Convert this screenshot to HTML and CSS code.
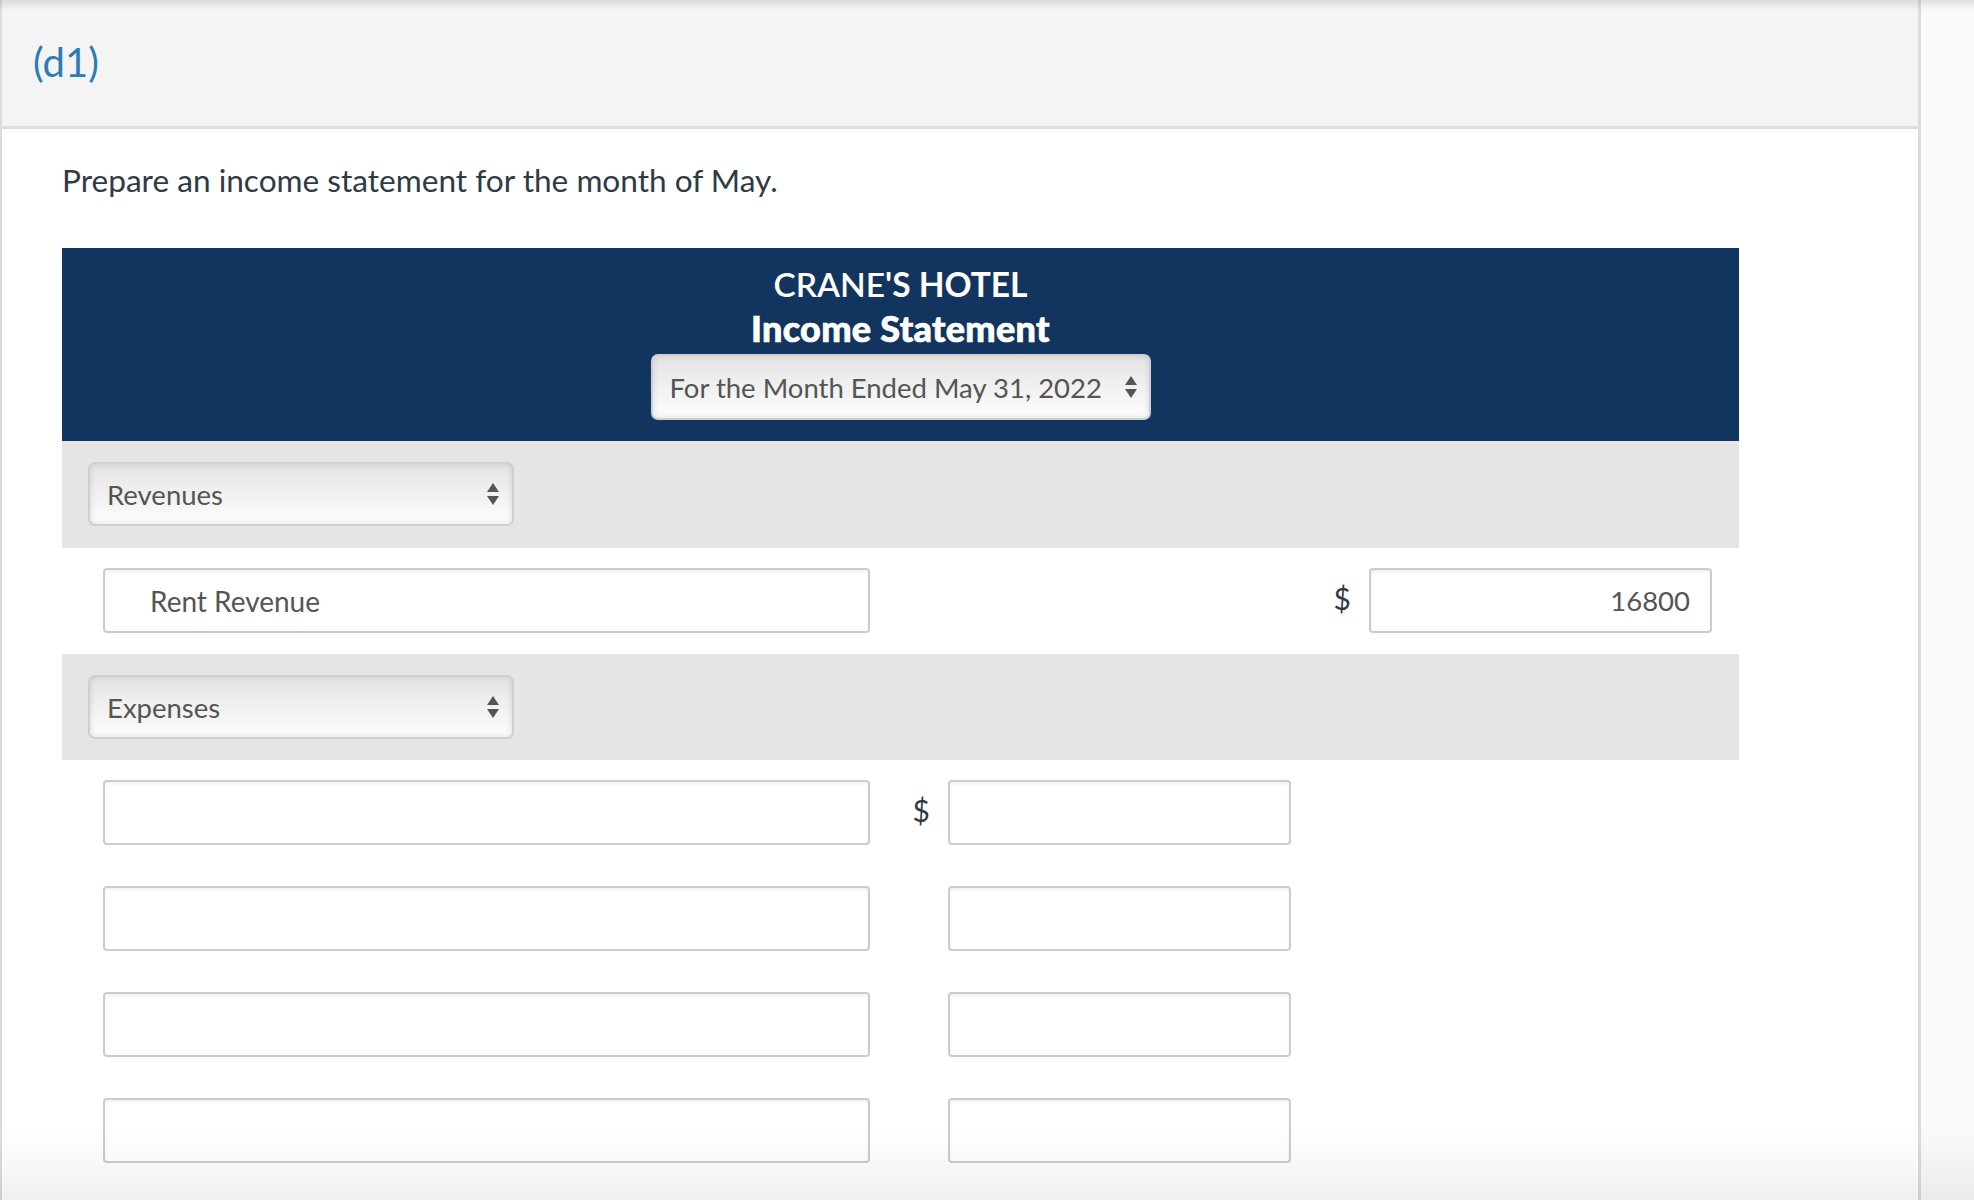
FILE: index.html
```html
<!DOCTYPE html>
<html lang="en">
<head>
<meta charset="utf-8">
<title>Income Statement</title>
<link rel="stylesheet" href="styles.css">
</head>
<body>
<div class="page">
  <main class="panel">
    <header class="part-head">
      <h2 class="part-label">(d1)</h2>
    </header>
    <section class="part-body">
      <p class="prompt">Prepare an income statement for the month of May.</p>
      <div class="statement">
        <div class="st-head">
          <div class="st-company"><span class="semi">CRANE</span>'S HOTEL</div>
          <div class="st-title">Income Statement</div>
          <div class="select select-date">
            <span>For the Month Ended May 31, 2022</span>
            <svg class="arrows" viewBox="0 0 12 22" width="12" height="22"><path d="M6 0 L12 9 L0 9 Z M0 13 L12 13 L6 22 Z" fill="#555"/></svg>
          </div>
        </div>
        <div class="band band-first">
          <div class="select select-sec">
            <span>Revenues</span>
            <svg class="arrows" viewBox="0 0 12 22" width="12" height="22"><path d="M6 0 L12 9 L0 9 Z M0 13 L12 13 L6 22 Z" fill="#555"/></svg>
          </div>
        </div>
        <div class="row">
          <input class="fld fld-label indent" type="text" value="Rent Revenue">
          <div class="cur"></div>
          <div class="spacer"></div>
          <div class="cur">$</div>
          <input class="fld fld-num" type="text" value="16800">
        </div>
        <div class="band">
          <div class="select select-sec">
            <span>Expenses</span>
            <svg class="arrows" viewBox="0 0 12 22" width="12" height="22"><path d="M6 0 L12 9 L0 9 Z M0 13 L12 13 L6 22 Z" fill="#555"/></svg>
          </div>
        </div>
        <div class="row">
          <input class="fld fld-label" type="text" value="">
          <div class="cur">$</div>
          <input class="fld fld-num" type="text" value="">
        </div>
        <div class="row">
          <input class="fld fld-label" type="text" value="">
          <div class="cur"></div>
          <input class="fld fld-num" type="text" value="">
        </div>
        <div class="row">
          <input class="fld fld-label" type="text" value="">
          <div class="cur"></div>
          <input class="fld fld-num" type="text" value="">
        </div>
        <div class="row">
          <input class="fld fld-label" type="text" value="">
          <div class="cur"></div>
          <input class="fld fld-num" type="text" value="">
        </div>
      </div>
    </section>
  </main>
  <aside class="side"></aside>
</div>
<div class="shade-top"></div>
<div class="shade-bottom"></div>
</body>
</html>
```
FILE: styles.css
```css
html, body {
  margin: 0;
  padding: 0;
}
body {
  font-family: Lato, "Open Sans", "Liberation Sans", sans-serif;
  background: #fafafa;
  color: #2e3a45;
  height: 1200px;
  overflow: hidden;
}
.page {
  display: flex;
  height: 1200px;
}
.panel {
  width: 1916px;
  background: #fff;
  border-left: 2px solid #dcdcdc;
  border-right: 3px solid #dcdcdc;
  flex: none;
}
.side {
  flex: 1;
  background: #fafafa;
}
.part-head {
  background: #f4f4f4;
  border-bottom: 3px solid #dedede;
  display: flex;
  align-items: center;
  padding-left: 31px;
  box-sizing: border-box;
  height: 129px;
}
.part-label {
  margin: 0;
  font-weight: 400;
  font-size: 40px;
  color: #2f7bb6;
  line-height: 1;
  padding-bottom: 2px;
}
.part-body {
  padding: 30px 0 0 60px;
}
.prompt {
  margin: 0 0 47px 0;
  font-size: 31.6px;
  line-height: 42px;
  color: #2e3a45;
}
.statement {
  width: 1677px;
}
.st-head {
  background: #12355f;
  height: 193px;
  display: flex;
  flex-direction: column;
  align-items: center;
  color: #fff;
  box-sizing: border-box;
  padding-top: 14px;
}
.st-company {
  font-size: 33.5px;
  font-weight: 700;
  line-height: 44px;
}
.st-company .semi {
  font-weight: 600;
}
.st-title {
  font-size: 36px;
  font-weight: 900;
  line-height: 44px;
  -webkit-text-stroke: 0.7px #fff;
  letter-spacing: 0.3px;
}
.select {
  display: flex;
  align-items: center;
  justify-content: space-between;
  box-sizing: border-box;
  border: 2px solid #cfcfcf;
  border-radius: 7px;
  background: linear-gradient(#e4e4e4, #f3f3f3 60%, #fdfdfd);
  box-shadow: inset 0 0 6px rgba(0,0,0,0.12);
  color: #555;
  font-size: 27.5px;
}
.select-date {
  margin-top: 4px;
  width: 500px;
  height: 66px;
  padding: 0 12px 0 17px;
}
.select-sec {
  width: 426px;
  height: 64px;
  padding: 0 13px 0 17px;
}
.arrows {
  flex: none;
}
.band {
  background: #e5e5e5;
  height: 106px;
  box-sizing: border-box;
  padding: 21px 0 0 26px;
}
.band-first {
  height: 107px;
}
.row {
  height: 106px;
  box-sizing: border-box;
  padding: 20px 0 0 41px;
  display: flex;
  align-items: flex-start;
}
.fld {
  box-sizing: border-box;
  height: 65px;
  border: 2px solid #cccccc;
  border-radius: 4px;
  background: #fff;
  box-shadow: inset 0 2px 3px rgba(0,0,0,0.06);
  font-family: Lato, "Open Sans", "Liberation Sans", sans-serif;
  font-size: 27.5px;
  color: #555;
  outline: none;
  margin: 0;
}
.fld-label {
  width: 767px;
  padding: 0 16px;
}
.fld-label.indent {
  padding-left: 45px;
  font-size: 28px;
}
.fld-num {
  width: 343px;
  text-align: right;
  padding: 0 20px;
}
.cur {
  width: 78px;
  height: 60px;
  box-sizing: border-box;
  padding-right: 18px;
  display: flex;
  align-items: center;
  justify-content: flex-end;
  font-size: 30px;
  color: #2e3a45;
}
.spacer {
  width: 343px;
}
.shade-top {
  position: fixed;
  left: 0;
  right: 0;
  top: 0;
  height: 10px;
  background: linear-gradient(rgba(0,0,0,0.1), rgba(0,0,0,0));
  pointer-events: none;
}
.shade-bottom {
  position: fixed;
  left: 0;
  right: 0;
  bottom: 0;
  height: 70px;
  background: linear-gradient(rgba(0,0,0,0), rgba(0,0,0,0.06));
  pointer-events: none;
}
```
